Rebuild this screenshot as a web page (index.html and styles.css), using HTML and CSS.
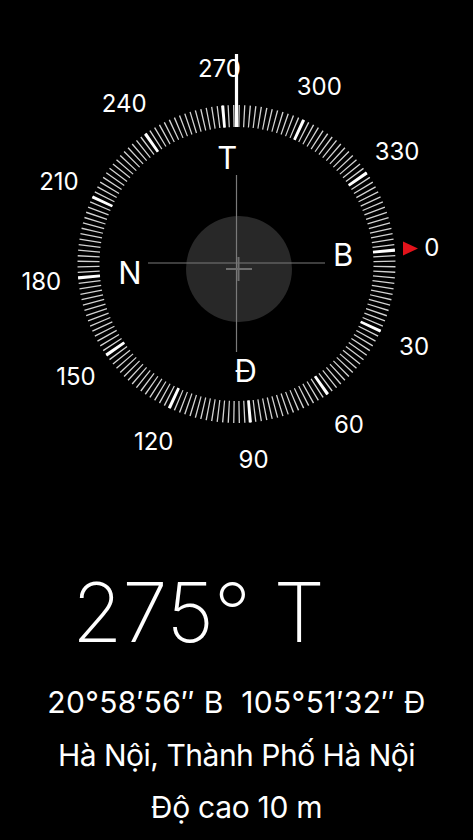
FILE: index.html
```html
<!DOCTYPE html>
<html lang="vi">
<head>
<meta charset="utf-8">
<title>La bàn</title>
<link rel="stylesheet" href="styles.css">
</head>
<body>
<main class="screen">
  <svg class="dial" width="473" height="520" viewBox="0 0 473 520" xmlns="http://www.w3.org/2000/svg">
    <g class="ring" transform="rotate(-5 236.5 264)">
      <circle class="ticks-minor" cx="236.5" cy="264" r="148" pathLength="360"></circle>
      <circle class="ticks-major" cx="236.5" cy="264" r="148" pathLength="360"></circle>
    </g>
    <line class="heading-line" x1="236.5" y1="54" x2="236.5" y2="127"></line>

    <g class="degrees">
      <text x="431.8" y="246.9" dy="0.36em">0</text>
      <text x="414.1" y="346.8" dy="0.36em">30</text>
      <text x="348.9" y="424.6" dy="0.36em">60</text>
      <text x="253.6" y="459.3" dy="0.36em">90</text>
      <text x="153.7" y="441.6" dy="0.36em">120</text>
      <text x="75.9" y="376.4" dy="0.36em">150</text>
      <text x="41.3" y="281.1" dy="0.36em">180</text>
      <text x="58.9" y="181.2" dy="0.36em">210</text>
      <text x="124.1" y="103.4" dy="0.36em">240</text>
      <text x="219.4" y="68.7" dy="0.36em">270</text>
      <text x="319.3" y="86.4" dy="0.36em">300</text>
      <text x="397.1" y="151.6" dy="0.36em">330</text>
    </g>

    <g class="cardinals">
      <text x="343.1" y="254.7" dy="0.36em">B</text>
      <text x="245.8" y="370.6" dy="0.36em">Đ</text>
      <text x="129.9" y="273.3" dy="0.36em">N</text>
      <text x="227.2" y="157.4" dy="0.36em">T</text>
    </g>

    <polygon class="north-marker" points="403,241.5 418,248.5 403,255.5"></polygon>

    <circle class="level" cx="239" cy="269" r="53"></circle>
    <line class="cross" x1="236.5" y1="175" x2="236.5" y2="352"></line>
    <line class="cross" x1="148" y1="263" x2="325" y2="263"></line>
    <line class="bubble-cross" x1="226" y1="269" x2="252" y2="269"></line>
    <line class="bubble-cross" x1="238.5" y1="257" x2="238.5" y2="281"></line>
  </svg>

  <section class="readout">
    <h1 class="heading">275° T</h1>
    <p class="info coords">20°58′56″ B&nbsp; 105°51′32″ Đ</p>
    <p class="info place">Hà Nội, Thành Phố Hà Nội</p>
    <p class="info altitude">Độ cao 10 m</p>
  </section>
</main>
</body>
</html>
```

FILE: styles.css
```css
html, body {
  margin: 0;
  padding: 0;
  background: #000;
}

body {
  width: 473px;
  height: 840px;
  overflow: hidden;
  color: #fff;
  font-family: "Inter", "Liberation Sans", sans-serif;
}

.screen {
  display: flex;
  flex-direction: column;
}

.dial {
  display: block;
}

.ticks-minor {
  fill: none;
  stroke: #d2d2d2;
  stroke-width: 22;
  stroke-dasharray: 0.5 1.5;
  stroke-dashoffset: 0.25;
}

.ticks-major {
  fill: none;
  stroke: #fff;
  stroke-width: 22;
  stroke-dasharray: 1.15 28.85;
  stroke-dashoffset: 0.575;
}

.heading-line {
  stroke: #fff;
  stroke-width: 3.2;
}

.degrees text {
  fill: #fff;
  font-family: "Inter", "Liberation Sans", sans-serif;
  font-size: 24px;
  text-anchor: middle;
}

.cardinals text {
  fill: #fff;
  font-family: "Inter", "Liberation Sans", sans-serif;
  font-size: 31px;
  text-anchor: middle;
}

.north-marker {
  fill: #e3131b;
}

.level {
  fill: #282828;
}

.cross {
  stroke: #7a7a7a;
  stroke-width: 1.2;
}

.bubble-cross {
  stroke: #6e6e6e;
  stroke-width: 2;
}

.readout {
  display: flex;
  flex-direction: column;
  align-items: center;
}

.heading {
  align-self: flex-start;
  margin: 43px 0 0 72px;
  font-size: 82px;
  font-weight: 200;
  line-height: 100px;
  letter-spacing: -0.3px;
}

.info {
  margin: 0;
  font-size: 30px;
  line-height: 52.5px;
  letter-spacing: 0.35px;
}

.coords {
  margin-top: 13px;
}

.place {
  letter-spacing: -0.5px;
}

.altitude {
  letter-spacing: -0.3px;
}
```
